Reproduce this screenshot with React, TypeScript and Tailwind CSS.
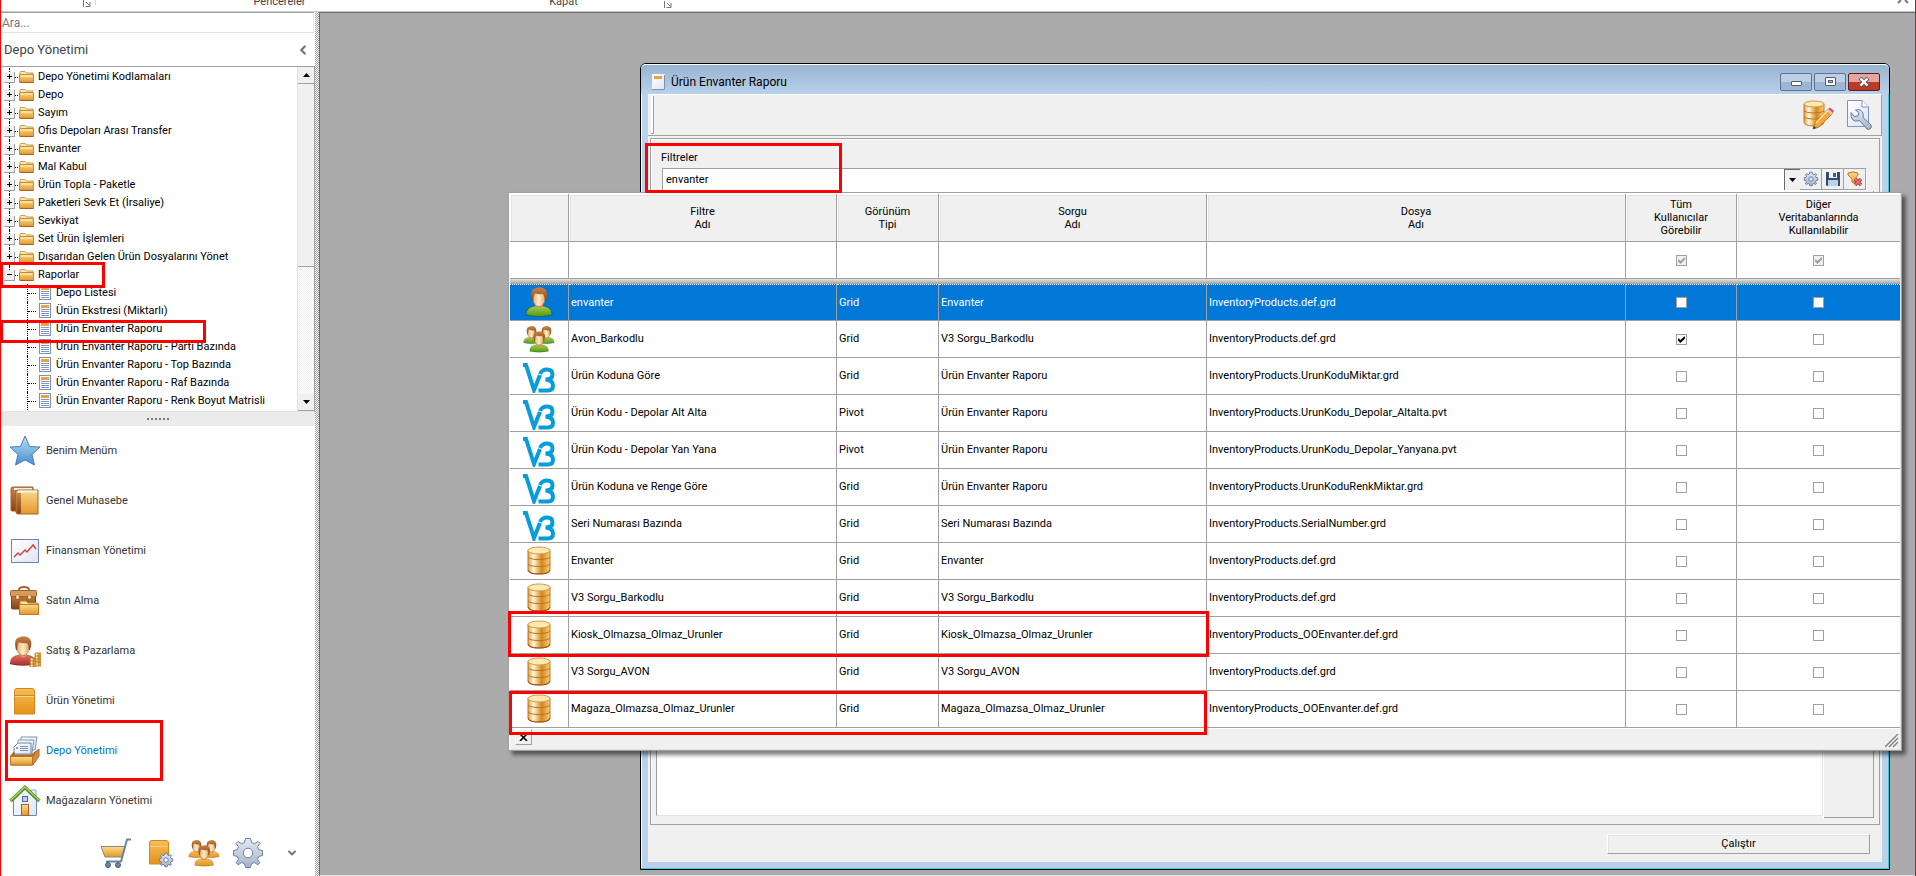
import type { ReactNode } from "react";
import { ChevronLeft, ChevronDown } from "lucide-react";

const folders = [
  "Depo Yönetimi Kodlamaları",
  "Depo",
  "Sayım",
  "Ofis Depoları Arası Transfer",
  "Envanter",
  "Mal Kabul",
  "Ürün Topla - Paketle",
  "Paketleri Sevk Et (İrsaliye)",
  "Sevkiyat",
  "Set Ürün İşlemleri",
  "Dışarıdan Gelen Ürün Dosyalarını Yönet",
];

const reports = [
  "Depo Listesi",
  "Ürün Ekstresi (Miktarlı)",
  "Ürün Envanter Raporu",
  "Ürün Envanter Raporu - Parti Bazında",
  "Ürün Envanter Raporu - Top Bazında",
  "Ürün Envanter Raporu - Raf Bazında",
  "Ürün Envanter Raporu - Renk Boyut Matrisli",
];

type Filter = {
  icon: "user" | "users" | "v3" | "db";
  name: string;
  type: string;
  query: string;
  file: string;
  all?: boolean;
};

const filters: Filter[] = [
  { icon: "user", name: "envanter", type: "Grid", query: "Envanter", file: "InventoryProducts.def.grd" },
  { icon: "users", name: "Avon_Barkodlu", type: "Grid", query: "V3 Sorgu_Barkodlu", file: "InventoryProducts.def.grd", all: true },
  { icon: "v3", name: "Ürün Koduna Göre", type: "Grid", query: "Ürün Envanter Raporu", file: "InventoryProducts.UrunKoduMiktar.grd" },
  { icon: "v3", name: "Ürün Kodu - Depolar Alt Alta", type: "Pivot", query: "Ürün Envanter Raporu", file: "InventoryProducts.UrunKodu_Depolar_Altalta.pvt" },
  { icon: "v3", name: "Ürün Kodu - Depolar Yan Yana", type: "Pivot", query: "Ürün Envanter Raporu", file: "InventoryProducts.UrunKodu_Depolar_Yanyana.pvt" },
  { icon: "v3", name: "Ürün Koduna ve Renge Göre", type: "Grid", query: "Ürün Envanter Raporu", file: "InventoryProducts.UrunKoduRenkMiktar.grd" },
  { icon: "v3", name: "Seri Numarası Bazında", type: "Grid", query: "Seri Numarası Bazında", file: "InventoryProducts.SerialNumber.grd" },
  { icon: "db", name: "Envanter", type: "Grid", query: "Envanter", file: "InventoryProducts.def.grd" },
  { icon: "db", name: "V3 Sorgu_Barkodlu", type: "Grid", query: "V3 Sorgu_Barkodlu", file: "InventoryProducts.def.grd" },
  { icon: "db", name: "Kiosk_Olmazsa_Olmaz_Urunler", type: "Grid", query: "Kiosk_Olmazsa_Olmaz_Urunler", file: "InventoryProducts_OOEnvanter.def.grd" },
  { icon: "db", name: "V3 Sorgu_AVON", type: "Grid", query: "V3 Sorgu_AVON", file: "InventoryProducts.def.grd" },
  { icon: "db", name: "Magaza_Olmazsa_Olmaz_Urunler", type: "Grid", query: "Magaza_Olmazsa_Olmaz_Urunler", file: "InventoryProducts_OOEnvanter.def.grd" },
];

/* Shared gradients for all icons */
function Gradients() {
  return (
    <svg className="absolute size-0" aria-hidden="true">
      <defs>
        <linearGradient id="gold" x1="0" y1="0" x2="0" y2="1">
          <stop offset="0" stopColor="#fbdc8a" />
          <stop offset="1" stopColor="#e2962a" />
        </linearGradient>
        <linearGradient id="orange" x1="0" y1="0" x2="0" y2="1">
          <stop offset="0" stopColor="#f6bd58" />
          <stop offset="1" stopColor="#e6921b" />
        </linearGradient>
        <linearGradient id="cyl" x1="0" y1="0" x2="1" y2="0">
          <stop offset="0" stopColor="#e0a040" />
          <stop offset="0.25" stopColor="#fff8dc" />
          <stop offset="0.62" stopColor="#d48818" />
          <stop offset="1" stopColor="#f8cf80" />
        </linearGradient>
        <linearGradient id="brown" x1="0" y1="0" x2="0" y2="1">
          <stop offset="0" stopColor="#c98548" />
          <stop offset="1" stopColor="#8a4216" />
        </linearGradient>
        <linearGradient id="skin" x1="0" y1="0" x2="1" y2="0">
          <stop offset="0" stopColor="#e9b070" />
          <stop offset="0.5" stopColor="#fdeccb" />
          <stop offset="1" stopColor="#e5a663" />
        </linearGradient>
        <linearGradient id="green" x1="0" y1="0" x2="0" y2="1">
          <stop offset="0" stopColor="#a5cc42" />
          <stop offset="1" stopColor="#549a1e" />
        </linearGradient>
        <linearGradient id="red" x1="0" y1="0" x2="0" y2="1">
          <stop offset="0" stopColor="#e07060" />
          <stop offset="1" stopColor="#b02c2c" />
        </linearGradient>
        <linearGradient id="blue" x1="0" y1="0" x2="0" y2="1">
          <stop offset="0" stopColor="#b5e2f8" />
          <stop offset="1" stopColor="#4a8cd0" />
        </linearGradient>
        <linearGradient id="steel" x1="0" y1="0" x2="0" y2="1">
          <stop offset="0" stopColor="#e4ebf4" />
          <stop offset="1" stopColor="#a4b3c8" />
        </linearGradient>
        <linearGradient id="paper" x1="0" y1="0" x2="1" y2="1">
          <stop offset="0" stopColor="#ffffff" />
          <stop offset="1" stopColor="#dde5f2" />
        </linearGradient>
      </defs>
    </svg>
  );
}

function FolderIcon() {
  return (
    <svg width="16" height="14" viewBox="0 0 16 14" className="shrink-0">
      <path d="M1 12V2.500Q1 1.500 2 1.500H6L7.500 3H14V6H1Z" fill="#fbe7b0" stroke="#c99a4a" />
      <rect x="0.500" y="4.500" width="14" height="8" rx="0.500" fill="url(#gold)" stroke="#c98a35" />
      <path d="M1 12.500H14.500" stroke="#a85f20" />
      <path d="M2 6H13" stroke="#fff3c8" />
    </svg>
  );
}

function ReportIcon() {
  return (
    <svg width="13" height="16" viewBox="0 0 13 16" className="shrink-0">
      <rect x="0.500" y="0.500" width="11" height="14" fill="#fdfdff" stroke="#7f8fc0" />
      <rect x="2" y="2" width="8" height="3" fill="#eba13c" />
      <path d="M2 6.500H10M2 8.500H10M2 10.500H10M2 12.500H10" stroke="#7c9ac8" />
    </svg>
  );
}

function DatabaseIcon() {
  return (
    <svg width="24" height="30" viewBox="0 0 24 30" className="inline-block">
      <path d="M1 4V24Q1 28 12 28Q23 28 23 24V4Z" fill="url(#cyl)" stroke="#c07a28" />
      <ellipse cx="12" cy="4.500" rx="11" ry="3.500" fill="#fde9b4" stroke="#d29a48" />
      <path d="M1 11Q3 13.500 12 13.500T23 11M1 18Q3 20.500 12 20.500T23 18" fill="none" stroke="#b9732a" />
      <path d="M1 24Q2 28 12 28T23 24" fill="none" stroke="#9a4c14" />
    </svg>
  );
}

function Person({ x, y, s, body }: { x: number; y: number; s: number; body: string }) {
  return (
    <g transform={`translate(${x} ${y}) scale(${s})`}>
      <path d="M1 28Q1 20 10 19H18Q27 20 27 28Q14 31 1 28Z" fill={body} stroke="#00000055" strokeWidth="0.800" />
      <path d="M10 19Q14 24 18 19V17H10Z" fill="#d99a58" />
      <ellipse cx="14" cy="12" rx="6" ry="7.500" fill="url(#skin)" stroke="#a96a30" strokeWidth="0.600" />
      <path d="M7 14Q4 2 11 1Q16 -1 20 2Q24 5 21 14L20 14Q20 8 18 7Q13 8 10 6Q8 8 8 14Z" fill="url(#brown)" />
    </g>
  );
}

function UserIcon() {
  return (
    <svg width="30" height="31" viewBox="0 0 30 31" className="inline-block">
      <Person x={1} y={0} s={1} body="url(#green)" />
    </svg>
  );
}

function UsersIcon({ body }: { body: string }) {
  return (
    <svg width="32" height="30" viewBox="0 0 32 30" className="inline-block">
      <Person x={0} y={2} s={0.6} body={body} />
      <Person x={15} y={2} s={0.6} body={body} />
      <Person x={6} y={7} s={0.72} body={body} />
    </svg>
  );
}

function V3Icon() {
  return (
    <svg width="32" height="34" viewBox="0 -4 32 34" className="inline-block" fill="none" stroke="#069ddb">
      <path d="M0 2H3L11 27L17 12" strokeWidth="4" />
      <path d="M17 11Q19 6.500 24 6.500Q29.500 6.500 29.500 11.500Q29.500 16.500 22.500 16.500Q30 17 30 22.500Q30 27.500 25 27.500H15.500" strokeWidth="4" />
    </svg>
  );
}

const filterIcons: Record<Filter["icon"], ReactNode> = {
  user: <UserIcon />,
  users: <UsersIcon body="url(#green)" />,
  v3: <V3Icon />,
  db: <DatabaseIcon />,
};

function Gear({ cx, cy, r, hole }: { cx: number; cy: number; r: number; hole: string }) {
  return (
    <g transform={`translate(${cx} ${cy}) scale(${r / 15})`}>
      <path
        d="M-2.500 -14.500H2.500L3.500 -10.500L6.500 -9.300L10 -11.500L12 -9.500L9.500 -6L10.700 -3.300L14.500 -2.500V2.500L10.700 3.500L9.500 6.300L11.800 9.800L9.800 11.800L6.300 9.500L3.500 10.700L2.500 14.500H-2.500L-3.500 10.700L-6.300 9.500L-9.800 11.800L-11.800 9.800L-9.500 6.300L-10.700 3.500L-14.500 2.500V-2.500L-10.700 -3.300L-9.500 -6L-12 -9.500L-10 -11.500L-6.500 -9.300L-3.500 -10.500Z"
        fill="url(#steel)"
        stroke="#6c7f9e"
        strokeWidth={15 / r}
        strokeLinejoin="round"
      />
      <circle r="4.800" fill={hole} stroke="#6c7f9e" strokeWidth={15 / r} />
    </g>
  );
}

function NavSvg({ children }: { children: ReactNode }) {
  return (
    <svg width="32" height="32" viewBox="0 0 32 32" className="shrink-0">
      {children}
    </svg>
  );
}

const navItems: { label: string; active?: boolean; icon: ReactNode }[] = [
  {
    label: "Benim Menüm",
    icon: (
      <path
        d="M16 1L20.500 11.500L31 12L23 19.500L25.500 30L16 25L6.500 30L9 19.500L1 12L11.500 11.500Z"
        fill="url(#blue)"
        stroke="#4b7fb8"
        strokeLinejoin="round"
      />
    ),
  },
  {
    label: "Genel Muhasebe",
    icon: (
      <>
        <path d="M2 4Q2 2 4 2H24V5H22V26H3Q2 26 2 25Z" fill="url(#brown)" stroke="#a2622a" />
        <path d="M5 3H23V5H5Z" fill="#eef1f6" />
        <path d="M7 7Q7 5 9 5H29V29H9Q7 29 7 27Z" fill="url(#gold)" stroke="#a2622a" />
        <path d="M7.500 8H12V28.500H9Q7.500 28.500 7.500 27Z" fill="url(#brown)" />
        <path d="M9 5.500H28V7.500H9Z" fill="#f2f4f8" />
      </>
    ),
  },
  {
    label: "Finansman Yönetimi",
    icon: (
      <>
        <rect x="2.500" y="4.500" width="27" height="23" fill="url(#paper)" stroke="#6f86b0" />
        <path d="M5 22L9 18L11 20L16 15L18 17L24 10L27 14" fill="none" stroke="#d8403a" strokeWidth="1.500" />
      </>
    ),
  },
  {
    label: "Satın Alma",
    icon: (
      <>
        <path d="M10 5Q10 2 15 2T20 5" fill="none" stroke="#a8623c" strokeWidth="2" />
        <rect x="2.500" y="8" width="24" height="16" rx="1" fill="url(#brown)" stroke="#87431b" />
        <rect x="1.500" y="5.500" width="26" height="6" rx="1" fill="#d59a5c" stroke="#a8642c" />
        <path d="M7 10H10V14H7ZM19 10H22V14H19Z" fill="#fff0b0" stroke="#8c4a1a" strokeWidth="0.500" />
        <path d="M11 29V17Q11 16 12 16H17L19 18H29V29Z" fill="#fbe3a0" stroke="#bf8030" />
        <rect x="10.500" y="19.500" width="19" height="10" fill="url(#gold)" stroke="#bf7a28" />
      </>
    ),
  },
  {
    label: "Satış & Pazarlama",
    icon: (
      <>
        <Person x={0} y={1} s={1} body="url(#red)" />
        <path d="M26 18H32V31H26Z" fill="url(#cyl)" stroke="#b87420" strokeWidth="0.800" />
        <path d="M21 23H27V32H21Z" fill="url(#cyl)" stroke="#b87420" strokeWidth="0.800" />
        <path d="M26 21H32M26 24H32M26 27H32M21 26H27M21 29H27" stroke="#b87420" />
      </>
    ),
  },
  {
    label: "Ürün Yönetimi",
    icon: (
      <>
        <path d="M5.500 6Q5.500 3.500 8 3.500H23Q25.500 3.500 25.500 6V29H5.500Z" fill="url(#orange)" stroke="#d4861c" />
        <path d="M6 10.500H25" stroke="#d4861c" />
        <path d="M6 11.500H25" stroke="#fbd48a" />
      </>
    ),
  },
  {
    label: "Depo Yönetimi",
    active: true,
    icon: (
      <>
        <path d="M12 2H28L26 15H12Z" fill="url(#paper)" stroke="#7d93b8" />
        <path d="M9 5H25L23 18H9Z" fill="url(#paper)" stroke="#7d93b8" />
        <path d="M5 12L9 8H22V19H5Z" fill="url(#paper)" stroke="#6b84ae" />
        <path d="M11 11.500H19M11 13.500H19M11 15.500H19" stroke="#8294b4" />
        <circle cx="8" cy="13" r="1" fill="#6b84ae" />
        <path d="M1.500 21L5 17V20H22L30 14V21L24 30H1.500Z" fill="url(#brown)" stroke="#a96824" />
        <path d="M1.500 21.500H23.500V30H1.500Z" fill="url(#gold)" stroke="#b8742a" />
        <path d="M24 21.500L29.500 15V22L24 29.500Z" fill="#d6893a" />
      </>
    ),
  },
  {
    label: "Mağazaların Yönetimi",
    icon: (
      <>
        <path d="M22 5H27V14H22Z" fill="#eef2fa" stroke="#8fa1c4" />
        <path d="M4.500 15L16 4L27.500 15V30.500H4.500Z" fill="url(#paper)" stroke="#6f86b8" />
        <path d="M1.500 16L16 2.500L30.500 16" fill="none" stroke="#4f8f26" strokeWidth="3.600" />
        <path d="M1.500 15.500L16 2L30.500 15.500" fill="none" stroke="#a5cf62" strokeWidth="1.600" />
        <rect x="13.500" y="11.500" width="5" height="5" fill="#bcd2f4" stroke="#4a68a8" />
        <rect x="12.500" y="19.500" width="7" height="11" fill="url(#gold)" stroke="#a9602a" />
      </>
    ),
  },
];

function Launcher() {
  return (
    <svg width="8" height="8" viewBox="0 0 8 8" className="shrink-0">
      <path d="M0.500 0V7M3 2L6.500 5.500M7 2V6.500H2.500" fill="none" stroke="#777" />
    </svg>
  );
}

function Ribbon() {
  return (
    <header className="flex h-3 shrink-0 items-start overflow-hidden border-b border-[#c9c9c9] bg-white text-[#444]">
      <div className="flex h-[5px] w-[95px] justify-end border-r border-[#dadada] pr-1">
        <Launcher />
      </div>
      <div className="flex h-[9px] w-[367px] items-end justify-center">Pencereler</div>
      <div className="flex h-[9px] w-[213px] items-end pr-1">
        <span className="flex-1 text-center">Kapat</span>
        <Launcher />
      </div>
      <svg width="12" height="4" viewBox="0 0 12 4" className="mr-1.5 ml-auto">
        <path d="M1 3L4 0M11 3L8 0" stroke="#777" strokeWidth="2" />
      </svg>
    </header>
  );
}

function Expander({ open }: { open?: boolean }) {
  return (
    <button
      aria-label={open ? "Daralt" : "Genişlet"}
      className="relative grid size-[11px] shrink-0 place-items-center border-r border-b border-[#a0a0a0] bg-[#f0f0f0]"
    >
      <svg width="5" height="5" viewBox="0 0 5 5">
        <path d={open ? "M0 2.500H5" : "M0 2.500H5M2.500 0V5"} stroke="#000" />
      </svg>
    </button>
  );
}

function Folder({ label, open, children }: { label: string; open?: boolean; children?: ReactNode }) {
  return (
    <li className="relative flex h-[18px] items-center pl-[3px]">
      <span className={`absolute top-0 left-[8px] border-l border-dotted border-black ${open ? "h-2" : "h-full"}`} />
      <Expander open={open} />
      <span className="mr-px w-[3px] border-t border-dotted border-black" />
      <FolderIcon />
      <span className="ml-[3px] whitespace-nowrap">{label}</span>
      {children}
    </li>
  );
}

function Tree() {
  return (
    <div className="flex h-[346px] shrink-0 border-t border-r border-b border-t-[#a0a0a0] border-r-[#a0a0a0] border-b-[#e3e3e3]">
      <ul className="min-w-0 flex-1 overflow-hidden pt-px">
        {folders.map((f) => (
          <Folder key={f} label={f} />
        ))}
        <Folder label="Raporlar" open>
          <span className="absolute -top-1 -left-px z-10 h-[26px] w-[105px] border-3 border-[#fe0000]" />
        </Folder>
        {reports.map((r, i) => (
          <li key={r} className="relative flex h-[18px] items-center pl-[26px]">
            <span className="h-full border-l border-dotted border-black" />
            <span className="mr-[3px] w-2 border-t border-dotted border-black" />
            <ReportIcon />
            <a href="#" className="ml-1 whitespace-nowrap">{r}</a>
            {i === 2 && <span className="absolute top-0 -left-px z-10 h-[23px] w-[206px] border-3 border-[#fe0000]" />}
          </li>
        ))}
      </ul>
      <div className="flex w-[17px] flex-col border-l border-[#e3e3e3] bg-[repeating-conic-gradient(#f0f0f0_0_25%,#fff_0_50%)] bg-[length:2px_2px]">
        <button aria-label="Yukarı" className="grid h-[17px] shrink-0 place-items-center border-b border-[#a0a0a0] bg-[#f0f0f0]">
          <svg width="7" height="4"><path d="M0 4L3.500 0L7 4Z" /></svg>
        </button>
        <div className="h-[183px] shrink-0 border-b border-[#a0a0a0] bg-[#f0f0f0]" />
        <button aria-label="Aşağı" className="mt-auto grid h-[17px] shrink-0 place-items-center border-b border-[#a0a0a0] bg-[#f0f0f0]">
          <svg width="7" height="4"><path d="M0 0L3.500 4L7 0Z" /></svg>
        </button>
      </div>
    </div>
  );
}

function Sidebar() {
  return (
    <aside className="flex w-[314px] shrink-0 flex-col overflow-hidden bg-white">
      <input
        aria-label="Ara"
        placeholder="Ara..."
        className="mr-px h-[21px] shrink-0 border-t border-r border-b border-t-[#a0a0a0] border-r-[#e3e3e3] border-b-[#e3e3e3] px-px text-[12px] placeholder:text-[#777]"
      />
      <div className="flex h-[33px] shrink-0 items-center justify-between pr-[5px] pl-[3px] text-[#444]">
        <h2 className="text-[13px]">Depo Yönetimi</h2>
        <button aria-label="Gizle"><ChevronLeft className="size-[14px]" strokeWidth={4} color="#777" /></button>
      </div>
      <Tree />
      <div className="flex h-[14px] shrink-0 items-center justify-center gap-[2px] bg-[#ebebeb]">
        {[0, 1, 2, 3, 4, 5].map((d) => (
          <i key={d} className="size-[2px] bg-[#777]" />
        ))}
      </div>
      <nav className="flex flex-col">
        {navItems.map((n) => (
          <a key={n.label} href="#" className={`relative flex h-[50px] items-center gap-[5px] pl-2 ${n.active ? "text-[#0072c6]" : "text-[#333]"}`}>
            <NavSvg>{n.icon}</NavSvg>
            {n.label}
            {n.active && <span className="absolute -top-1.5 left-1 h-[61px] w-[158px] border-3 border-[#fe0000]" />}
          </a>
        ))}
      </nav>
      <div className="flex h-[50px] shrink-0 items-center justify-end gap-3 pt-1 pr-[7px]">
        <button aria-label="Sipariş">
          <NavSvg>
            <path d="M1 9.500H25L22 20H5Z" fill="url(#gold)" stroke="#8e8878" />
            <path d="M31 2.500H27L21 24.500H6" fill="none" stroke="#6d83a6" strokeWidth="2" />
            <circle cx="8" cy="28" r="2.500" fill="#7487a4" stroke="#45587a" />
            <circle cx="18" cy="28" r="2.500" fill="#7487a4" stroke="#45587a" />
          </NavSvg>
        </button>
        <button aria-label="Ürün ayarları">
          <NavSvg>
            <path d="M5.500 6Q5.500 3.500 8 3.500H22Q24.500 3.500 24.500 6V27H5.500Z" fill="url(#orange)" stroke="#d4861c" />
            <path d="M6 9.500H24" stroke="#fbd48a" />
            <Gear cx={22} cy={23} r={7} hole="#fff" />
          </NavSvg>
        </button>
        <button aria-label="Kullanıcılar"><UsersIcon body="url(#orange)" /></button>
        <button aria-label="Ayarlar">
          <NavSvg><Gear cx={16} cy={16} r={15} hole="#fff" /></NavSvg>
        </button>
        <button aria-label="Diğer" className="grid w-8 place-items-center">
          <ChevronDown className="size-3" strokeWidth={4} color="#777" />
        </button>
      </div>
    </aside>
  );
}

function CaptionButton({ label, danger, children }: { label: string; danger?: boolean; children: ReactNode }) {
  return (
    <button
      aria-label={label}
      className={`grid h-[18px] w-8 place-items-center rounded-[2px] border ${
        danger
          ? "border-[#5c1d24] bg-linear-to-b from-[#e3a59b] from-50% to-[#b93a25] to-50%"
          : "border-[#5f7391] bg-linear-to-b from-[#bccfe6] from-50% to-[#9cb6d4] to-50%"
      }`}
    >
      {children}
    </button>
  );
}

function ReportWindow() {
  return (
    <section className="absolute top-[50px] right-[25px] bottom-[5px] left-[320px] flex flex-col rounded-t-[6px] border border-black bg-[#b9d1ea] pr-[7px] pb-[7px] pl-[7px] shadow-[inset_-1px_-1px_0_#2fd0ea,inset_1px_1px_0_#fff]">
      <div className="-mx-[7px] flex h-[30px] shrink-0 items-center gap-1.5 rounded-t-[5px] border-t border-white bg-linear-to-b from-[#99b4d1] to-[#b9d1ea] pt-1 pr-[9px] pl-[11px]">
        <svg width="13" height="16" viewBox="0 0 13 16">
          <rect x="0.500" y="0.500" width="12" height="15" fill="url(#paper)" stroke="#f4f6fb" />
          <path d="M12.500 1V15.500H0" fill="none" stroke="#7f8fc0" />
          <rect x="2" y="2" width="8" height="3" fill="#eba13c" />
        </svg>
        <h1 className="mr-auto text-[12px] text-black">Ürün Envanter Raporu</h1>
        <div className="flex gap-[2px]">
          <CaptionButton label="Simge durumuna küçült">
            <span className="mt-1 h-[5px] w-[11px] rounded-[1px] border border-[#555b6b] bg-white" />
          </CaptionButton>
          <CaptionButton label="Ekranı kapla">
            <span className="h-[9px] w-[11px] rounded-[1px] border border-[#555b6b] bg-white p-[2px]">
              <span className="block h-[3px] border border-[#555b6b] bg-[#9cb6d4]" />
            </span>
          </CaptionButton>
          <CaptionButton label="Kapat" danger>
            <svg width="12" height="10" viewBox="0 0 12 10">
              <path d="M2 1L10 9M10 1L2 9" stroke="#555b6b" strokeWidth="4" />
              <path d="M2.500 1.500L9.500 8.500M9.500 1.500L2.500 8.500" stroke="#fff" strokeWidth="2.400" />
            </svg>
          </CaptionButton>
        </div>
      </div>

      <div className="flex min-h-0 flex-1 flex-col bg-[#f0f0f0]">
        {/* Toolbar */}
        <div className="flex h-[42px] shrink-0 items-center justify-end gap-2 border-t border-r border-b border-t-white border-r-[#a0a0a0] border-b-[#a0a0a0] pr-[7px]">
          <span className="mr-auto ml-[3px] h-[38px] w-[3px] border-r border-b border-[#a0a0a0] bg-white" />
          <button aria-label="Sorguyu düzenle">
            <NavSvg>
              <path d="M2 5V23Q2 27 12 27Q22 27 22 23V5Z" fill="url(#cyl)" stroke="#c07a28" />
              <ellipse cx="12" cy="5" rx="10" ry="3" fill="#fde9b4" stroke="#d29a48" />
              <path d="M2 12Q4 14 12 14T22 12M2 18Q4 20 12 20T22 18" fill="none" stroke="#b9732a" />
              <path d="M11 30L13 24L26 10L31 14L17 28Z" fill="#f4a63c" stroke="#a86820" strokeWidth="0.800" />
              <path d="M14 24L26 11" stroke="#ffe2a0" strokeWidth="1.500" />
              <path d="M26 10L28 8.500L32 12L31 14Z" fill="#e05545" />
              <path d="M24.500 11.500L26 10L31 14L29.500 15.500Z" fill="#c9d3e2" />
              <path d="M11 30L12 27L14 29Z" fill="#333" />
            </NavSvg>
          </button>
          <button aria-label="Rapor ayarları">
            <NavSvg>
              <path d="M5.500 1.500H20L26.500 8V27.500H5.500Z" fill="url(#paper)" stroke="#7e92bc" />
              <path d="M20 1.500V8H26.500" fill="#fff" stroke="#7e92bc" />
              <path
                d="M9 13.500L12.500 17.500L16 17L17 13.500L13.500 11Q19.500 9.500 21 14.500Q21.500 16.500 21 18.500L29 26Q30 28 28.500 29.500T25 30L17.500 21.500Q13 23.500 10.500 20.500Q8.500 17.500 9 13.500Z"
                fill="url(#steel)"
                stroke="#66799a"
                strokeLinejoin="round"
              />
            </NavSvg>
          </button>
        </div>

        {/* Filter panel */}
        <div className="mt-[2px] mr-[2px] ml-[2px] flex min-h-0 flex-1 flex-col border border-[#a0a0a0] pr-[5px] shadow-[inset_1px_1px_0_#fff]">
          <label htmlFor="filter" className="mt-3 ml-2.5 h-[17px]">Filtreler</label>
          <div className="mr-[7px] ml-[11px] flex h-[23px] shrink-0 border border-t-[#a0a0a0] border-r-white border-b-white border-l-[#a0a0a0] bg-white">
            <input id="filter" defaultValue="envanter" className="min-w-0 flex-1 px-[3px] text-black" />
            <button aria-label="Listeyi aç" className="grid w-4 place-items-center border-t border-l border-[#696969] bg-[#f0f0f0]">
              <svg width="7" height="4"><path d="M0 0L3.500 4L7 0Z" /></svg>
            </button>
            <button aria-label="Filtre ayarları" className="grid w-[22px] place-items-center border-r border-b border-[#a0a0a0] bg-[#f0f0f0]">
              <svg width="16" height="16" viewBox="0 0 16 16"><Gear cx={8} cy={8} r={7} hole="#dfe6f0" /></svg>
            </button>
            <button aria-label="Kaydet" className="grid w-[22px] place-items-center border-r border-b border-[#a0a0a0] bg-[#f0f0f0]">
              <svg width="16" height="16" viewBox="0 0 16 16">
                <path d="M1 1H15V15H2L1 14Z" fill="#3b4a66" />
                <path d="M4 1H12V7H4Z" fill="#e9f1fb" />
                <path d="M8 2H11V6H8Z" fill="#4a5b7c" />
                <path d="M3 9H13V15H3Z" fill="#b5d3ef" />
              </svg>
            </button>
            <button aria-label="Filtreyi temizle" className="grid w-[22px] place-items-center border-r border-b border-[#a0a0a0] bg-[#f0f0f0]">
              <svg width="16" height="16" viewBox="0 0 16 16">
                <path d="M1 2Q6 0 11 2V4L8 8V13L5 11V8L1 4Z" fill="url(#gold)" stroke="#c07a28" />
                <path d="M8 8L14 14M14 8L8 14" stroke="#b83a38" strokeWidth="3.400" />
                <path d="M8 8L14 14M14 8L8 14" stroke="#ec8078" strokeWidth="1.400" />
              </svg>
            </button>
          </div>
          <div className="mb-[6px] ml-[5px] flex flex-1">
            <div className="mb-[2px] flex-1 border border-t-0 border-r-[#e3e3e3] border-b-[#e3e3e3] border-l-[#a0a0a0] bg-white" />
            <div className="ml-px w-[50px] border-r border-b border-[#a0a0a0] shadow-[-1px_0_0_#fff]" />
          </div>
        </div>

        <div className="flex h-[37px] shrink-0 items-center justify-end pr-3">
          <button className="h-5 w-[263px] border border-t-white border-r-[#a0a0a0] border-b-[#a0a0a0] border-l-white text-black shadow-[inset_1px_1px_0_#e3e3e3]">
            Çalıştır
          </button>
        </div>
      </div>
    </section>
  );
}

function CheckBox({ label, checked, muted }: { label: string; checked?: boolean; muted?: boolean }) {
  return (
    <span className="grid place-items-center">
      <input
        type="checkbox"
        aria-label={label}
        defaultChecked={checked}
        className={`peer col-start-1 row-start-1 size-[11px] appearance-none border border-[#a0a0a0] ${muted ? "bg-[#f0f0f0]" : "bg-white"}`}
      />
      <svg width="7" height="7" viewBox="0 0 7 7" className="pointer-events-none col-start-1 row-start-1 hidden peer-checked:block">
        <path d="M0 3L2.500 5.500L7 1" fill="none" stroke={muted ? "#a0a0a0" : "#000"} strokeWidth="2" />
      </svg>
    </span>
  );
}

const columns = [
  [""],
  ["Filtre", "Adı"],
  ["Görünüm", "Tipi"],
  ["Sorgu", "Adı"],
  ["Dosya", "Adı"],
  ["Tüm", "Kullanıcılar", "Görebilir"],
  ["Diğer", "Veritabanlarında", "Kullanılabilir"],
];

function FilterPopup() {
  const cell = "h-[37px] border-b border-[#a0a0a0]";
  return (
    <div className="absolute top-[179px] right-[13px] left-[188px] border border-[#a0a0a0] bg-[#f0f0f0] shadow-[4px_4px_4px_rgba(0,0,0,0.5)]">
      <div className="border border-t-white border-r-[#e3e3e3] border-b-[#e3e3e3] border-l-white">
        <table className="w-full table-fixed border-separate border-spacing-0 bg-white text-black">
          <colgroup>
            <col className="w-[59px]" />
            <col className="w-[268px]" />
            <col className="w-[102px]" />
            <col className="w-[268px]" />
            <col />
            <col className="w-[111px]" />
            <col className="w-[163px]" />
          </colgroup>
          <thead>
            <tr>
              {columns.map((lines, i) => (
                <th
                  key={i}
                  className="h-12 border-r border-b border-[#a0a0a0] bg-[#f0f0f0] p-0 leading-[13px] font-normal shadow-[inset_1px_1px_0_#fff,inset_2px_2px_0_#e3e3e3] last:border-r-0"
                >
                  {lines.map((l) => (
                    <span key={l} className="block">{l}</span>
                  ))}
                </th>
              ))}
            </tr>
            <tr>
              {columns.map((_, i) => (
                <td key={i} className={`${cell} border-r p-0 last:border-r-0`}>
                  {i > 4 && <CheckBox label={columns[i].join(" ")} checked muted />}
                </td>
              ))}
            </tr>
            <tr>
              <td colSpan={7} className="h-[5px] bg-linear-to-b from-[#e3e3e3] to-[#a0a0a0] p-0" />
            </tr>
          </thead>
          <tbody>
            {filters.map((f, i) => {
              const selected = i === 0;
              const edge = selected ? "h-[37px] border-t border-b border-t-white border-b-[#a0a0a0] [border-top-style:dotted]" : cell;
              const td = `${edge} border-r border-r-[#a0a0a0] px-[2px] py-0 whitespace-nowrap`;
              return (
                <tr key={f.name} className={selected ? "bg-[#0078d7] text-white" : ""}>
                  <td className={td}>
                    <span className="flex justify-center">{filterIcons[f.icon]}</span>
                  </td>
                  <td className={td}>{f.name}</td>
                  <td className={td}>{f.type}</td>
                  <td className={td}>{f.query}</td>
                  <td className={td}>{f.file}</td>
                  <td className={td}>
                    <CheckBox label={`${f.name} tüm kullanıcılar`} checked={f.all} />
                  </td>
                  <td className={`${edge} p-0`}>
                    <CheckBox label={`${f.name} diğer veritabanları`} />
                  </td>
                </tr>
              );
            })}
          </tbody>
        </table>
        <div className="flex h-[21px] items-start justify-between border-t border-white pl-[5px]">
          <button aria-label="Kapat" className="grid h-4 w-[17px] place-items-center border border-t-white border-r-[#a0a0a0] border-b-[#a0a0a0] border-l-white">
            <svg width="9" height="7" viewBox="0 0 9 7"><path d="M1 0L8 7M8 0L1 7" stroke="#000" strokeWidth="1.600" /></svg>
          </button>
          <svg width="14" height="14" viewBox="0 0 14 14" className="mt-[5px] mr-px">
            <path d="M0 13L13 0M4 13L13 4M8 13L13 8" stroke="#808080" strokeWidth="1.400" />
          </svg>
        </div>
      </div>
      {/* Highlight frames around the two marked filters */}
      <span className="absolute bottom-[93px] -left-px h-[46px] w-[701px] border-3 border-[#fe0000]" />
      <span className="absolute bottom-[15px] left-0 h-[44px] w-[698px] border-3 border-[#fe0000]" />
    </div>
  );
}

export default function App() {
  return (
    <div className="flex h-screen flex-col overflow-hidden border-x border-[#fe0000] bg-white font-['Roboto','Noto_Sans',sans-serif] text-[11px] leading-[14px] text-black">
      <Gradients />
      <Ribbon />
      <div className="flex min-h-0 flex-1">
        <Sidebar />
        <div className="w-[5px] shrink-0 bg-[repeating-conic-gradient(#a0a0a0_0_25%,#fff_0_50%)] bg-[length:2px_2px]" />
        <main className="relative -ml-px min-w-0 flex-1 border-t border-l border-b border-t-[#696969] border-b-[#e3e3e3] border-l-[#696969] bg-[#ababab]">
          <ReportWindow />
          <FilterPopup />
          <span className="absolute top-[130px] left-[325px] h-[50px] w-[197px] border-3 border-[#fe0000]" />
        </main>
      </div>
    </div>
  );
}
